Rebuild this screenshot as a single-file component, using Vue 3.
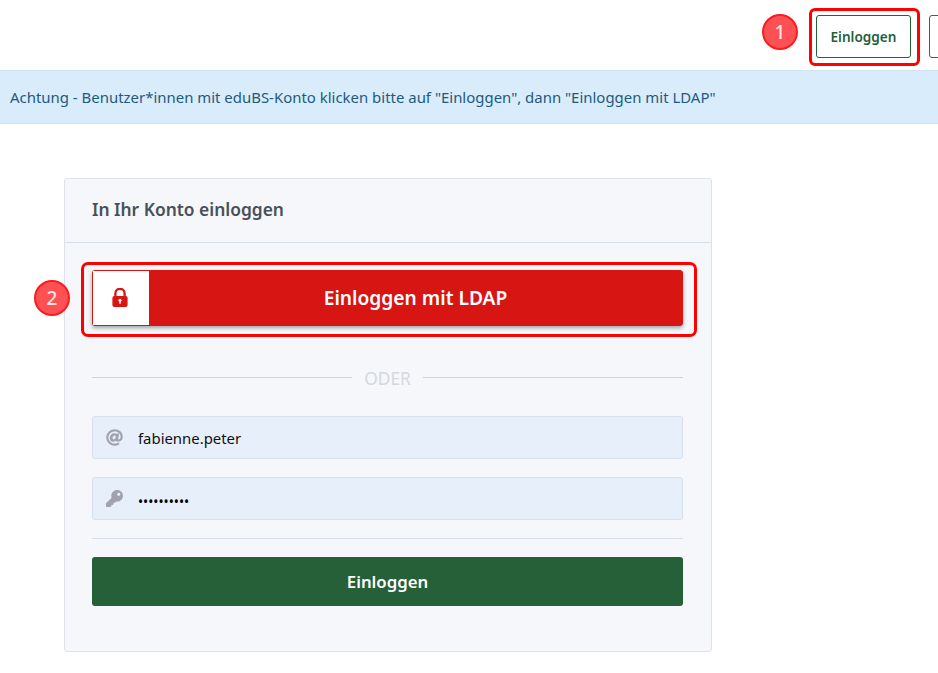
<script setup>
const notice = 'Achtung - Benutzer*innen mit eduBS-Konto klicken bitte auf "Einloggen", dann "Einloggen mit LDAP"'
</script>

<template>
  <div class="page">
    <header class="topbar">
      <span class="marker marker-one">1</span>
      <div class="login-wrap">
        <button class="btn-outline">Einloggen</button>
      </div>
      <button class="btn-outline btn-cut"></button>
    </header>

    <div class="notice">{{ notice }}</div>

    <main class="content">
      <section class="card">
        <h2 class="card-title">In Ihr Konto einloggen</h2>
        <div class="card-body">
          <div class="ldap-wrap">
            <span class="marker marker-two">2</span>
            <div class="ldap-ring"></div>
            <button class="ldap-btn">
              <span class="ldap-icon">
                <svg width="16" height="19" viewBox="0 0 16 19">
                  <path d="M3.4 9V5.4a4.6 4.6 0 0 1 9.2 0V9" fill="none" stroke="#d71513" stroke-width="2.3" />
                  <rect x="0.4" y="8" width="15.2" height="11" rx="2" fill="#d71513" />
                  <circle cx="8" cy="12.3" r="1.5" fill="#fff" />
                  <rect x="7.3" y="12.4" width="1.4" height="3.4" fill="#fff" />
                </svg>
              </span>
              <span class="ldap-label">Einloggen mit LDAP</span>
            </button>
          </div>

          <div class="divider"><span>ODER</span></div>

          <div class="field">
            <svg class="field-icon" width="17" height="17" viewBox="0 0 512 512">
              <path fill="#a0a3ad" d="M256 8C118.941 8 8 118.919 8 256c0 137.059 110.919 248 248 248 48.154 0 95.342-14.14 135.408-40.223 12.005-7.815 14.625-24.288 5.552-35.372l-10.177-12.433c-7.671-9.371-21.179-11.667-31.373-5.129C325.92 429.757 291.314 440 256 440c-101.458 0-184-82.542-184-184S154.542 72 256 72c100.139 0 184 57.619 184 160 0 38.786-21.093 79.742-58.17 83.693-17.349-.454-16.91-12.857-13.476-30.024l23.433-121.11C394.653 149.75 383.308 136 368.225 136h-44.981a13.518 13.518 0 0 0-13.432 11.993l-.01.092c-14.697-17.901-40.448-21.775-59.971-21.775-74.58 0-137.831 62.234-137.831 151.46 0 65.303 36.785 105.87 96 105.87 26.984 0 57.369-15.637 74.991-38.333 9.522 34.104 40.613 34.103 70.71 34.103C462.609 379.41 504 307.798 504 232 504 95.653 394.023 8 256 8zm-21.68 304.43c-22.249 0-36.07-15.623-36.07-40.771 0-44.993 30.779-72.729 58.63-72.729 22.292 0 35.601 15.241 35.601 40.77 0 45.061-33.875 72.73-58.161 72.73z" />
            </svg>
            <span class="field-value">fabienne.peter</span>
          </div>

          <div class="field">
            <svg class="field-icon" width="17" height="17" viewBox="0 0 512 512">
              <path fill="#a0a3ad" d="M512 176.001C512 273.203 433.202 352 336 352c-11.22 0-22.19-1.062-32.827-3.069l-24.012 27.014A23.999 23.999 0 0 1 261.223 384H224v40c0 13.255-10.745 24-24 24h-40v40c0 13.255-10.745 24-24 24H24c-13.255 0-24-10.745-24-24v-78.059c0-6.365 2.529-12.47 7.029-16.971l161.802-161.802C163.108 213.814 160 195.271 160 176 160 78.798 238.797.001 335.999 0 433.488-.001 512 78.511 512 176.001zM336 128c0 26.51 21.49 48 48 48s48-21.49 48-48-21.49-48-48-48-48 21.49-48 48z" />
            </svg>
            <span class="field-value dots">••••••••••</span>
          </div>

          <hr class="rule" />

          <button class="submit">Einloggen</button>
        </div>
      </section>
    </main>
  </div>
</template>

<style>
html, body {
  margin: 0;
  background: #fff;
  overflow: hidden;
}
</style>

<style scoped>
.page {
  width: 938px;
  height: 673px;
  overflow: hidden;
  font-family: "Noto Sans", "Open Sans", sans-serif;
  color: #4a4f58;
}

.topbar {
  box-sizing: border-box;
  height: 70px;
  display: flex;
  align-items: center;
  padding-left: 762px;
  gap: 18px;
  width: 1000px;
}

.marker {
  box-sizing: border-box;
  width: 36px;
  height: 36px;
  border-radius: 50%;
  background: #ff5053;
  border: 2px solid #fb1c20;
  color: #fde3e3;
  font-family: "Noto Sans", sans-serif;
  font-size: 19px;
  font-weight: 500;
  display: flex;
  align-items: center;
  justify-content: center;
  flex-shrink: 0;
}

.marker-one {
  margin-top: -7px;
  margin-right: -7px;
}

.login-wrap {
  box-sizing: border-box;
  width: 111px;
  height: 58px;
  margin-top: 4px;
  padding-left: 4px;
  padding-bottom: 2px;
  border: 3px solid #f00;
  border-radius: 6px;
  display: flex;
  align-items: center;
}

.btn-outline {
  box-sizing: border-box;
  width: 95px;
  height: 43px;
  background: #fff;
  border: 1px solid #24603a;
  border-radius: 3px;
  color: #24603a;
  font-family: inherit;
  font-size: 13.6px;
  font-weight: 600;
  padding: 0;
}

.btn-cut {
  margin-left: -9px;
  margin-top: 3px;
  width: 60px;
  border-color: #555;
}

.notice {
  box-sizing: border-box;
  height: 54px;
  padding: 0 10px;
  display: flex;
  align-items: center;
  background: #d9ecfb;
  border-top: 1px solid #cfe3f4;
  border-bottom: 1px solid #cfe3f4;
  color: #1f5a7e;
  font-size: 14.95px;
  white-space: nowrap;
}

.content {
  padding: 54px 0 0 64px;
}

.card {
  box-sizing: border-box;
  width: 648px;
  height: 474px;
  background: #f5f7fb;
  border: 1px solid #dfe2ea;
  border-radius: 3px;
}

.card-title {
  box-sizing: border-box;
  height: 64px;
  margin: 0;
  padding: 0 27px 4px;
  display: flex;
  align-items: center;
  border-bottom: 1px solid #d8dee9;
  font-size: 17.4px;
  font-weight: 600;
  color: #4a4f58;
}

.card-body {
  padding: 27px 28px 0 27px;
}

.ldap-wrap {
  position: relative;
}

.ldap-ring {
  position: absolute;
  left: -11px;
  right: -14px;
  top: -8px;
  bottom: -11px;
  border: 3px solid #f00;
  border-radius: 7px;
  pointer-events: none;
}

.marker-two {
  position: absolute;
  left: -58px;
  top: 10px;
}

.ldap-btn {
  box-sizing: border-box;
  width: 100%;
  height: 56px;
  padding: 0;
  border: 1px solid #d71513;
  border-radius: 3px;
  display: flex;
  background: #d71513;
  box-shadow: 0 2px 4px rgba(0, 0, 0, 0.35);
  font-family: inherit;
}

.ldap-icon {
  box-sizing: border-box;
  width: 56px;
  padding: 0 2px 2px 0;
  background: #fff;
  display: flex;
  align-items: center;
  justify-content: center;
  flex-shrink: 0;
}

.ldap-label {
  flex: 1;
  align-self: center;
  padding-bottom: 2px;
  color: #fff;
  font-size: 19.2px;
  font-weight: 600;
  text-align: center;
}

.divider {
  margin-top: 42px;
  height: 19px;
  display: flex;
  align-items: center;
  gap: 12px;
  color: #d5d7dc;
  font-size: 17.4px;
}

.divider::before,
.divider::after {
  content: "";
  flex: 1;
  height: 1px;
  background: #cfd2d6;
}

.field {
  box-sizing: border-box;
  height: 43px;
  margin-top: 18px;
  padding-left: 13px;
  display: flex;
  align-items: center;
  gap: 15px;
  background: #e7effb;
  border: 1px solid #d8dfec;
  border-radius: 3px;
}

.divider + .field {
  margin-top: 29px;
}

.field-icon {
  flex-shrink: 0;
}

.field-value {
  color: #111;
  font-size: 14.9px;
}

.dots {
  font-size: 13.6px;
  letter-spacing: 0;
  color: #000;
  padding-top: 5px;
}

.rule {
  margin: 18px 0;
  border: none;
  border-top: 1px solid #d8dee9;
}

.submit {
  width: 100%;
  height: 49px;
  border: none;
  border-radius: 3px;
  background: #256038;
  color: #fff;
  font-family: inherit;
  font-size: 16.8px;
  font-weight: 600;
  padding: 0;
}
</style>
